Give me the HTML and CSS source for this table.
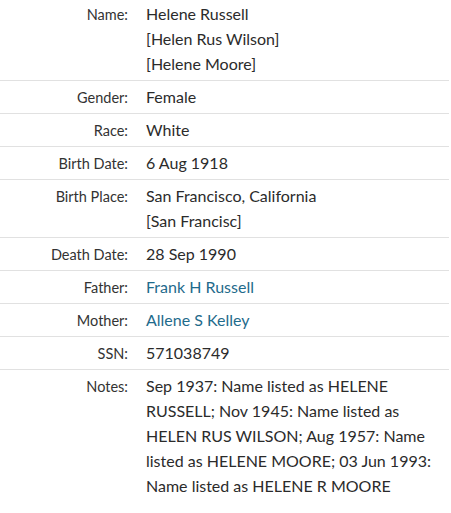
FILE: index.html
```html
<!DOCTYPE html>
<html>
<head>
<meta charset="utf-8">
<link rel="stylesheet" href="styles.css">
</head>
<body>
<dl class="record">
  <div class="row first">
    <dt class="label">Name:</dt>
    <dd class="value">Helene Russell<br>[Helen Rus Wilson]<br>[Helene Moore]</dd>
  </div>
  <div class="row">
    <dt class="label">Gender:</dt>
    <dd class="value">Female</dd>
  </div>
  <div class="row">
    <dt class="label">Race:</dt>
    <dd class="value">White</dd>
  </div>
  <div class="row">
    <dt class="label">Birth Date:</dt>
    <dd class="value">6 Aug 1918</dd>
  </div>
  <div class="row">
    <dt class="label">Birth Place:</dt>
    <dd class="value">San Francisco, California<br>[San Francisc]</dd>
  </div>
  <div class="row">
    <dt class="label">Death Date:</dt>
    <dd class="value">28 Sep 1990</dd>
  </div>
  <div class="row">
    <dt class="label">Father:</dt>
    <dd class="value"><a class="link" href="#">Frank H Russell</a></dd>
  </div>
  <div class="row">
    <dt class="label">Mother:</dt>
    <dd class="value"><a class="link" href="#">Allene S Kelley</a></dd>
  </div>
  <div class="row">
    <dt class="label">SSN:</dt>
    <dd class="value">571038749</dd>
  </div>
  <div class="row last">
    <dt class="label">Notes:</dt>
    <dd class="value notes">Sep 1937: Name listed as HELENE RUSSELL; Nov 1945: Name listed as HELEN RUS WILSON; Aug 1957: Name listed as HELENE MOORE; 03 Jun 1993: Name listed as HELENE R MOORE</dd>
  </div>
</dl>
</body>
</html>
```
FILE: styles.css
```css
html, body {
  margin: 0;
  padding: 0;
  background: #ffffff;
}
body {
  font-family: Lato, "Open Sans", "Liberation Sans", sans-serif;
  color: #333333;
}
.record {
  margin: 0;
  width: 449px;
}
.row {
  display: flex;
  align-items: baseline;
  padding: 3px 0 4px;
  border-bottom: 1px solid #e1e1e1;
}
.row.first {
  padding-top: 1px;
}
.row.last {
  border-bottom: none;
}
.label {
  width: 128px;
  flex: none;
  text-align: right;
  font-size: 14.5px;
  line-height: 20px;
  color: #333333;
}
.value {
  margin: 0 0 0 18px;
  font-size: 16px;
  line-height: 25px;
  color: #2b2b2b;
}
.notes {
  width: 290px;
}
.link {
  color: #1f6b8c;
  text-decoration: none;
}
```
